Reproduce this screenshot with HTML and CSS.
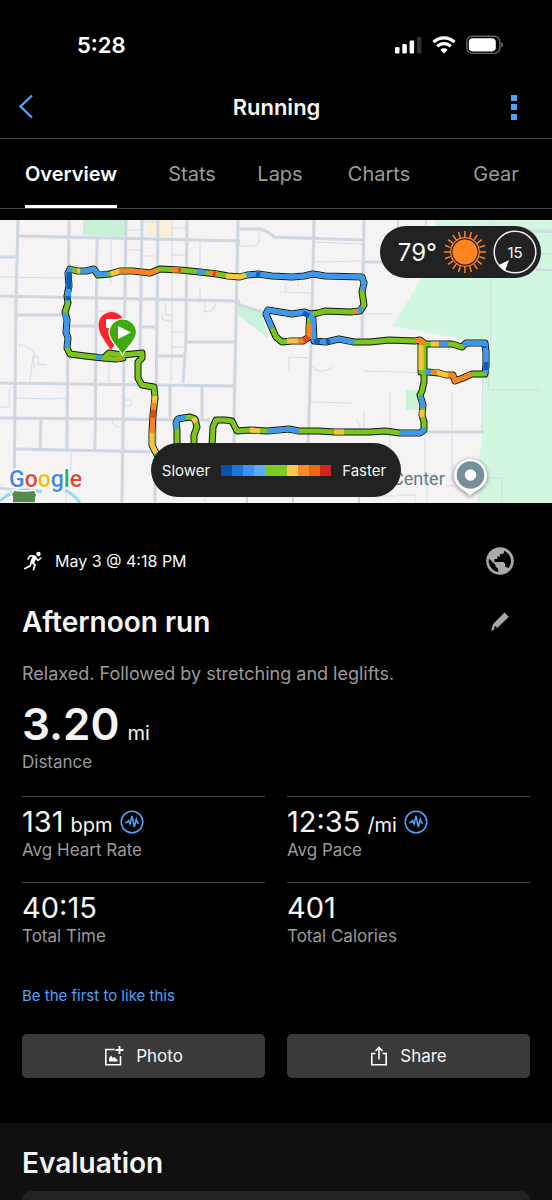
FILE: index.html
```html
<!DOCTYPE html>
<html lang="en">
  <head>
    <meta charset="UTF-8">
    <meta name="viewport" content="width=device-width, initial-scale=1.0">
    <link rel="stylesheet" href="styles.css">
    <title>Running</title>
  </head>
  <body>
    <div class="status-bar">
      <span class="time">5:28</span>
      <div class="status-icons">
        <svg width="27" height="18" viewBox="0 0 27 18" fill="#fff">
          <rect x="0" y="11" width="4.5" height="6.5" rx="1.3"/>
          <rect x="7.3" y="8" width="4.5" height="9.5" rx="1.3"/>
          <rect x="14.6" y="4.5" width="4.5" height="13" rx="1.3"/>
          <rect x="21.9" y="1" width="4.5" height="16.5" rx="1.3" fill="#333"/>
        </svg>
        <svg width="24" height="18" viewBox="0 0 24 18" fill="none" stroke="#fff" stroke-width="3.2">
          <path d="M1.5 6.2a15 15 0 0 1 21 0"/>
          <path d="M5.3 10.3a9.6 9.6 0 0 1 13.4 0"/>
          <path d="M12 17.5l-3.6-3.7a5.2 5.2 0 0 1 7.2 0z" fill="#fff" stroke="none"/>
        </svg>
        <svg width="38" height="20" viewBox="0 0 38 20">
          <rect x="0.8" y="1.2" width="33" height="17.2" rx="5.5" fill="none" stroke="#666" stroke-width="1.4"/>
          <rect x="2.8" y="3.2" width="27" height="13.2" rx="3.8" fill="#fff"/>
          <path d="M35.3 7v5.6c2.3-1 2.3-4.6 0-5.6z" fill="#777"/>
        </svg>
      </div>
    </div>

    <header class="header">
      <button class="icon-button back" aria-label="Back">
        <svg width="16" height="26" viewBox="0 0 16 26" fill="none" stroke="#4fa3f7" stroke-width="2.4">
          <path d="M14 1.5L2.5 12.5L14 23.5"/>
        </svg>
      </button>
      <h1>Running</h1>
      <button class="icon-button" aria-label="More">
        <svg width="6" height="26" viewBox="0 0 6 26" fill="#4fa3f7">
          <rect width="6" height="6" y="1"/>
          <rect width="6" height="6" y="10"/>
          <rect width="6" height="6" y="20"/>
        </svg>
      </button>
    </header>

    <nav class="tabs">
      <a class="tab active" href="#overview">Overview</a>
      <a class="tab" href="#stats">Stats</a>
      <a class="tab" href="#laps">Laps</a>
      <a class="tab" href="#charts">Charts</a>
      <a class="tab" href="#gear">Gear</a>
    </nav>

    <div class="map">
      <svg class="map-canvas" viewBox="0 0 552 283" preserveAspectRatio="xMidYMid slice">
        <defs>
          <g id="route-line">
            <path d="M123 138L116 139L103 138L85 136L70 134L67 128L68 118L66 112L67 100L65 92L68 83L67 76L69 66L68 53L70 49L77 51L86 51L94 49L98 55L110 54L120 51L133 51L150 53L160 49L180 50L200 52L217 54L228 56L240 57L247 55L258 54L272 56L292 57L304 56L313 54L325 56L362 57L364 63L362 72L364 85L360 91L350 92L325 91L318 93L310 94"/>
            <path d="M310 94L305 92L292 94L280 92L268 90L266 94L272 108L276 117L282 122L292 121L303 121L309 117L309 108L310 94L313 99L314 121L326 122L339 119L354 122L370 122L389 120L415 121L420 120L425 124L435 124L452 124L462 127L466 123L485 123L486 132L486 145L485 154L472 154L463 158L455 161L453 155L446 155L439 153L427 152"/>
            <path d="M421 123L421 152M424 125L424 162L422 171L420 175L423 185L422 195L424 202L424 210L420 213L400 213L385 211L370 212L349 212L335 212L318 211L299 211L289 209L267 211L250 210L237 211L232 201L225 200L216 200L213 207L212 226"/>
            <path d="M177 225L177 210L176 203L178 199L183 198L190 197L195 199L197 207L194 215L194 226"/>
            <path d="M105 137L109 133L122 135L133 134L142 133L142 138L138 142L138 158L142 165L154 167L155 178L153 195L152 212L152 225L156 233L158 236"/>
          </g>
        </defs>
        <rect width="552" height="283" fill="#f5f3f4"/>
        <!-- parks -->
        <path d="M435 0H552V283H477V250L482 220L483 123L392 106L435 37z" fill="#d2f7e1"/>
        <path d="M83 0H125V17L83 15z" fill="#c5f1d6"/>
        <path d="M238 85L262 92L268 118L238 95z" fill="#c9f2da"/>
        <path d="M406 170h12v20h-12z" fill="#c9f2da"/>
        <path d="M147 0h10v16h-10zM160 0h12v17h-12z" fill="#fcefd6"/>
        <!-- streets -->
        <g fill="none" stroke="#cfd7e2" stroke-width="3">
          <path d="M18 0L16 80L14 283"/>
          <path d="M69 0L67 220"/>
          <path d="M97 18L95 229"/>
          <path d="M126 0L122 283"/>
          <path d="M142 0L140 135"/>
          <path d="M158 0L155 283"/>
          <path d="M187 0L186 120L183 163"/>
          <path d="M238 0L234 200V262"/>
          <path d="M314 0L312 90L308 230"/>
          <path d="M364 0L362 118"/>
          <path d="M18 16L240 21"/>
          <path d="M0 37H17M238 9H260Q268 11 274 17L363 20M364 42H390"/>
          <path d="M0 76L240 81"/>
          <path d="M16 95H66M70 106H95M140 107H155M186 122H235M155 136H183"/>
          <path d="M238 84Q255 91 268 92"/>
          <path d="M0 163L234 166"/>
          <path d="M0 198L210 200"/>
          <path d="M14 229L160 232"/>
          <path d="M41 198L40 229M67 220V229M170 165V198M202 166V198M424 212H484M0 268L16 270"/>
        </g>
        <g fill="none" stroke="#d4dbe4" stroke-width="1">
          <path d="M0 57L67 58M111 20V65M125 30H140M142 36H155M172 0V140M172 8H186M172 35H186M200 20V60M155 80L166 81M142 2h15"/>
          <path d="M126 10H141M239 21V26H255Q259 25 259 20V9M200 68v15M205 83v9l8-2 4-9M165 83l1 12h6M162 93v6l10 3M171 112H186M171 127H186"/>
          <path d="M18 125Q26 124 34 132V149M33 136L30 161M33 136l5 1v7l8 1M109 134V162M171 140V162M97 91H115"/>
          <path d="M16 178L50 179L67 178M0 187h9v-14q0-5 5-6M125 180h6v6h-6M112 200q0 6 7 7M71 233V250L66 252V283"/>
          <path d="M280 72L312 73M315 42L363 41M315 22L363 24M279 52V58M286 64V72M298 60V66M364 94H392"/>
          <path d="M289 152V137L308 138M364 151L432 153M312 146Q320 156 332 147M310 182L351 183M390 172V230M364 192V212M356 200L360 205V212M452 172V262"/>
          <path d="M491 0V110L488 170H540M425 213V263M483 123L482 213M492 8L552 10M492 33L552 34M530 48L552 50M489 150V170M480 258H502V282M446 266H455M397 275h18v8M436 252L427 266V283M205 278V283M214 276H395"/>
        </g>
        <g fill="none" stroke="#cfd7e2" stroke-width="2">
          <path d="M398 0V8M426 0V5M480 10L552 12M536 50H552M247 277V283M293 277V283M359 277V283"/>
        </g>
        <path d="M0 281Q16 265 42 272M65 270Q76 276 80 283" fill="none" stroke="#8edced" stroke-width="3"/>
        <path d="M12 283Q13 276 11 274Q14 272 13 270Q24 272 35 270Q35 273 37 275Q35 278 36 283z" fill="#57884f" stroke="#fff" stroke-width="1.5"/>
        <!-- route: dark edge, green base, then the pace colours -->
        <use class="route route-edge" href="#route-line"/>
        <use class="route route-green" href="#route-line"/>
        <g class="route route-blue">
          <path d="M67 126L68 118L66 112L67 100L65 95M68 79L69 66L68 53L70 50M83 51L86 51L94 49L98 54L106 54M199 52L203 52M248 55L258 54L272 56L292 57L304 56L313 54L325 56L362 57L364 63L363 68M361 89L360 90"/>
          <path d="M310 94L305 92L292 94L280 92L268 90L266 94L271 106M310 95L313 99L314 121L326 122L339 119L352 122M441 124L446 124M465 124L466 123L485 123L486 132L486 145L486 151M429 152H427"/>
          <path d="M421 178L423 186M424 210L420 213L402 213M297 211L289 209L270 211M176 207L176 203L178 199L184 198M98 137L100 137"/>
        </g>
        <g class="route route-navy">
          <path d="M69 52V69M68 76V80M256 54L260 55M303 93L309 96M314 121L320 122M326 122L330 121M484 126V128M486 142V150"/>
        </g>
        <g class="route route-yellow">
          <path d="M77 51L80 51M111 54L120 51M226 56L240 57L246 55M287 121L298 121M431 124L439 124M421 125L421 150M448 155L446 155L439 153L436 152M422 190L422 197M344 212L334 212M260 211L250 210M152 212L152 225L156 233M155 176L154 184M193 198L196 202"/>
        </g>
        <g class="route route-orange">
          <path d="M119 51L133 51L150 53L158 50M172 50L182 50M210 53L218 54M358 91L353 92M298 121L303 121L309 117L309 104M415 121L420 120L425 124M471 154L463 158L455 161L453 155L448 155M437 152L431 152M154 183L153 195L152 213M117 139H120"/>
        </g>
        <g class="route route-red">
          <path d="M178 50H181M213 53L216 54M154 190L153 198M304 121L309 117"/>
        </g>
        <!-- finish and start pins -->
        <path d="M111 130C104 120 98.5 113 98.5 105a13 13 0 0 1 26 0C124.500 113 118 120 111 130z" fill="#f8262f"/>
        <path d="M106 99h11v9h-11z" fill="#fff"/>
        <path d="M122.5 135C117 126 109 120.5 109 112.5a13.7 13.500 0 0 1 27.500 0C136.500 120.500 128 126 122.500 135z" fill="#3faa0b" stroke="#fff" stroke-width="1.2"/>
        <path d="M118 106L131 112.5L118 119z" fill="#fff"/>
        <!-- place marker -->
        <text class="place-name" x="392" y="265">Center</text>
        <path class="place-pin" d="M470 276C466 270 454 268 454 255.5a16.5 16.5 0 0 1 33 0C487 268 475 270 470 276z" fill="#fff"/>
        <circle cx="470.5" cy="255" r="13.8" fill="#76909c"/>
        <circle cx="470.5" cy="255" r="5.7" fill="#fff"/>
        <text class="google" x="9" y="267"><tspan fill="#4285f4">G</tspan><tspan fill="#ea4335">o</tspan><tspan fill="#fbbc05">o</tspan><tspan fill="#4285f4">g</tspan><tspan fill="#34a853">l</tspan><tspan fill="#ea4335">e</tspan></text>
      </svg>

      <div class="weather">
        <span class="temperature">79°</span>
        <svg width="42" height="42" viewBox="-21 -21 42 42" stroke="#ff841f" fill="none">
          <circle r="12.5" fill="#ff841f" stroke="none"/>
          <circle r="14.3" stroke-width="1.2"/>
          <path stroke-width="1.5" d="M0-15V-21M0 15V21M-15 0H-21M15 0H21M4.6-14.3L6.5-20M-4.6-14.3L-6.5-20M4.6 14.3L6.5 20M-4.6 14.3L-6.5 20M8.8-12.1L12.3-17M-8.8-12.1L-12.3-17M8.8 12.1L12.3 17M-8.8 12.1L-12.3 17M12.1-8.8L17-12.3M-12.1-8.8L-17-12.3M12.1 8.8L17 12.3M-12.1 8.8L-17 12.3M14.3-4.6L20-6.5M-14.3-4.6L-20-6.5M14.3 4.6L20 6.5M-14.3 4.6L-20 6.5"/>
        </svg>
        <div class="wind">
          <svg width="44" height="44" viewBox="-22 -22 44 44">
            <circle r="20.8" fill="none" stroke="#eee" stroke-width="1.5"/>
            <path d="M-6 8L-16 13Q-14 17-10 19z" fill="#fff"/>
          </svg>
          <span class="wind-speed">15</span>
        </div>
      </div>

      <div class="legend">
        <span>Slower</span>
        <div class="scale">
          <i class="c1"></i><i class="c2"></i><i class="c3"></i><i class="c4"></i><i class="c5"></i><i class="c5"></i><i class="c6"></i><i class="c7"></i><i class="c8"></i><i class="c9"></i>
        </div>
        <span>Faster</span>
      </div>
    </div>

    <main class="activity">
      <div class="meta">
        <svg width="20" height="20" viewBox="0 0 20 20" fill="none" stroke="#fff" stroke-linecap="round" stroke-linejoin="round">
          <circle cx="14.5" cy="3" r="2.2" fill="#fff" stroke="none"/>
          <path d="M10.500 6.5L8.500 10.500" stroke-width="4"/>
          <path d="M10 5L6 4.800L4 8M12 7L14 9.500L17 7" stroke-width="1.5"/>
          <path d="M7.500 11L6 15L1 17.500M8.500 11.500L11 14L9.500 18.500" stroke-width="1.8"/>
        </svg>
        <span class="date">May 3 @ 4:18 PM</span>
        <svg width="28" height="28" viewBox="0 0 28 28">
          <circle cx="14" cy="14" r="13.8" fill="#a9a9a9"/>
          <path d="M3 11.5L9.5 18v1.5l2.7 2.6v3A11.3 11.3 0 0 1 3 11.5z" fill="#000"/>
          <path d="M18 3.8A11.2 11.2 0 0 1 22.5 21.2L20.5 20H19V16.5L17.5 15H8.5V12h2.8V9.5H14V7h2.5L18 5.7z" fill="#000"/>
        </svg>
      </div>

      <div class="title">
        <h2>Afternoon run</h2>
        <button class="icon-button" aria-label="Edit">
          <svg width="20" height="20" viewBox="0 0 20 20" fill="#a9a9a9">
            <path d="M14.5 0.500L18.800 4.800L7.3 16L1 19L3.200 12z"/>
            <path d="M4.500 14.300l2 .3.300 1.600-2.800 1.300z" fill="#000"/>
          </svg>
        </button>
      </div>

      <p class="description">Relaxed. Followed by stretching and leglifts.</p>

      <div class="distance">
        <div class="value"><strong>3.20</strong> <span class="unit">mi</span></div>
        <div class="label">Distance</div>
      </div>

      <div class="stats">
        <div class="stat">
          <div class="value">131 <span class="unit">bpm</span>
            <svg class="pulse" width="24" height="24" viewBox="0 0 24 24">
              <circle cx="12" cy="12" r="10.8"/>
              <path d="M5 12.5H7L8.5 10.5L10 14L12 6L14.3 17L16.3 9L17.5 13H19"/>
            </svg>
          </div>
          <div class="label">Avg Heart Rate</div>
        </div>
        <div class="stat">
          <div class="value">12:35 <span class="unit">/mi</span>
            <svg class="pulse" width="24" height="24" viewBox="0 0 24 24">
              <circle cx="12" cy="12" r="10.8"/>
              <path d="M5 12.5H7L8.5 10.5L10 14L12 6L14.3 17L16.3 9L17.5 13H19"/>
            </svg>
          </div>
          <div class="label">Avg Pace</div>
        </div>
        <div class="stat">
          <div class="value">40:15</div>
          <div class="label">Total Time</div>
        </div>
        <div class="stat">
          <div class="value">401</div>
          <div class="label">Total Calories</div>
        </div>
      </div>

      <a class="like" href="#like">Be the first to like this</a>

      <div class="actions">
        <button class="action">
          <svg width="20" height="20" viewBox="0 0 20 20" fill="none" stroke="#fff" stroke-width="1.6">
            <path d="M10.5 3.5H1.8V18.7H16.5V10"/>
            <path d="M15.5 0V8M11.5 4H19.5" stroke-width="1.9"/>
            <path d="M5 15.5V12.5L7 9.5L9 12L10.5 11L13.5 14V15.5z" fill="#fff" stroke="none"/>
          </svg>
          Photo
        </button>
        <button class="action">
          <svg width="18" height="20" viewBox="0 0 18 20" fill="none" stroke="#fff" stroke-width="1.6">
            <path d="M5.5 7.5H1.8V18.7H16.2V7.5H12.5"/>
            <path d="M9 13.5V2M5.5 5L9 1.5L12.5 5"/>
          </svg>
          Share
        </button>
      </div>
    </main>

    <section class="evaluation">
      <h2>Evaluation</h2>
      <div class="card"></div>
    </section>
  </body>
</html>
```
FILE: styles.css
```css
* {
  box-sizing: border-box;
}

body {
  font-family: Inter, "Liberation Sans", sans-serif;
  background-color: #000;
  color: #f5f5f5;
  display: flex;
  flex-direction: column;
  min-height: 100vh;
  margin: 0;
}

h1,
h2,
p {
  margin: 0;
}

svg {
  display: block;
  flex-shrink: 0;
}

button {
  font-family: inherit;
  border: none;
  cursor: pointer;
}

.icon-button {
  background: none;
  padding: 0;
}

.status-bar {
  display: flex;
  justify-content: space-between;
  align-items: center;
  padding: 30px 48px 16px 77px;
  height: 76px;
}

.time {
  font-size: 22px;
  font-weight: 600;
  color: #fff;
}

.status-icons {
  display: flex;
  align-items: center;
  gap: 10px;
}

.header {
  display: flex;
  align-items: center;
  height: 63px;
  padding: 0 35px 0 18px;
  border-bottom: 1px solid #444;
}

.header h1 {
  flex: 1;
  text-align: center;
  font-size: 22px;
  font-weight: 600;
}

.back {
  width: 24px;
}

.tabs {
  display: grid;
  grid-template-columns: 142fr 100fr 76fr 122fr 112fr;
  justify-items: center;
  height: 70px;
  border-bottom: 1px solid #444;
}

.tab {
  display: flex;
  align-items: center;
  font-size: 20px;
  color: #9a9a9a;
  text-decoration: none;
  border-top: 3px solid transparent;
  border-bottom: 3px solid transparent;
}

.tab.active {
  font-weight: 600;
  color: #fff;
  border-bottom-color: #fff;
}

.map {
  position: relative;
  margin-top: 11px;
}

.map-canvas {
  width: 100%;
  height: 283px;
}

.route {
  fill: none;
  stroke-width: 5;
  stroke-linecap: round;
  stroke-linejoin: round;
}

.route-edge {
  stroke: #0b1a10;
  stroke-width: 7;
}

.route-green {
  stroke: #7bc51e;
}

.route-blue {
  stroke: #3f96f5;
}

.route-navy {
  stroke: #0f5cb5;
}

.route-yellow {
  stroke: #fbc43f;
}

.route-orange {
  stroke: #fb8322;
}

.route-red {
  stroke: #e04a12;
}

.route-navy,
.route-yellow,
.route-orange,
.route-red {
  stroke-linecap: butt;
}

.place-name {
  font-family: Roboto, sans-serif;
  font-size: 18px;
  fill: #647b88;
}

.place-pin {
  filter: drop-shadow(0 1px 2px rgba(0, 0, 0, 0.5));
}

.google {
  font-family: Roboto, sans-serif;
  font-size: 23px;
  font-weight: 500;
  stroke: #fff;
  stroke-width: 3px;
  paint-order: stroke;
}

.weather {
  position: absolute;
  top: 6px;
  right: 11px;
  display: flex;
  align-items: center;
  gap: 7px;
  height: 52px;
  padding: 0 4px 0 18px;
  border-radius: 26px;
  background-color: #222;
}

.temperature {
  font-size: 24px;
}

.wind {
  display: grid;
  place-items: center;
}

.wind svg,
.wind-speed {
  grid-area: 1 / 1;
}

.wind-speed {
  font-size: 15px;
}

.legend {
  position: absolute;
  bottom: 6px;
  left: 50%;
  transform: translateX(-50%);
  display: flex;
  align-items: center;
  justify-content: center;
  gap: 11px;
  width: 250px;
  height: 54px;
  padding-right: 4px;
  border-radius: 27px;
  background-color: #222;
  font-size: 15px;
}

.scale {
  display: flex;
}

.scale i {
  width: 11px;
  height: 11px;
}

.c1 { background-color: #0551a8; }
.c2 { background-color: #1a77d8; }
.c3 { background-color: #3b94f5; }
.c4 { background-color: #5caafb; }
.c5 { background-color: #7fca20; }
.c6 { background-color: #fccb4c; }
.c7 { background-color: #fd8a29; }
.c8 { background-color: #f0660f; }
.c9 { background-color: #d8201f; }

.activity {
  display: flex;
  flex-direction: column;
  padding: 44px 22px 45px;
}

.meta {
  display: flex;
  align-items: center;
  height: 28px;
  padding: 0 16px 0 2px;
}

.date {
  flex: 1;
  margin-left: 11px;
  font-size: 16px;
}

.title {
  display: flex;
  justify-content: space-between;
  align-items: center;
  height: 36px;
  margin-top: 29px;
  padding-right: 20px;
}

.title h2,
.evaluation h2 {
  font-size: 28px;
  font-weight: 600;
  line-height: 36px;
}

.description,
.label {
  color: #9a9a9a;
  line-height: 24px;
}

.description {
  margin-top: 22px;
  font-size: 18px;
}

.label {
  font-size: 17px;
}

.value {
  display: flex;
  align-items: baseline;
}

.distance {
  margin-top: 12px;
  height: 98px;
}

.distance .value {
  gap: 8px;
  line-height: 52px;
}

.distance strong {
  font-size: 44px;
  font-weight: 600;
}

.value .unit {
  font-size: 20px;
  line-height: 24px;
}

.stats {
  display: grid;
  grid-template-columns: 1fr 1fr;
  column-gap: 22px;
}

.stat {
  height: 86px;
  padding-top: 8px;
  border-top: 1px solid #444;
}

.stat .value {
  gap: 7px;
  font-size: 29px;
  line-height: 33px;
}

.pulse {
  align-self: center;
  fill: none;
  stroke: #4fa3f7;
  stroke-width: 1.5;
}

.like {
  align-self: flex-start;
  margin-top: 18px;
  font-size: 15px;
  line-height: 20px;
  color: #4fa3f7;
  text-decoration: none;
}

.actions {
  display: grid;
  grid-template-columns: 1fr 1fr;
  gap: 22px;
  margin-top: 28px;
}

.action {
  display: flex;
  justify-content: center;
  align-items: center;
  gap: 12px;
  height: 44px;
  border-radius: 5px;
  background-color: #3a3a3a;
  color: #f5f5f5;
  font-size: 17px;
}

.evaluation {
  flex: 1;
  display: flex;
  flex-direction: column;
  padding: 22px 22px 0;
  background-color: #101010;
}

.card {
  flex: 1;
  margin-top: 10px;
  border-radius: 10px 10px 0 0;
  background-color: #222;
}
```
